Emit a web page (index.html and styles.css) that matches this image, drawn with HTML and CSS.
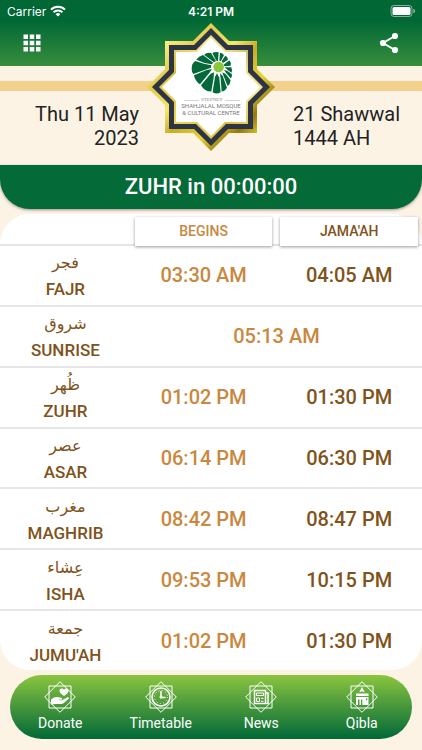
FILE: index.html
```html
<!DOCTYPE html>
<html lang="en">
<head>
    <meta charset="UTF-8">
    <meta name="viewport" content="width=device-width, initial-scale=1.0">
    <title>Stepney Shahjalal Mosque</title>
    <link rel="stylesheet" href="styles.css">
</head>
<body>
    <header>
        <!-- Status Bar -->
        <div class="status-bar">
            <div class="carrier">
                <span>Carrier</span>
                <svg width="16" height="12" viewBox="0 0 16 12" fill="none" stroke="#fff" stroke-width="2">
                    <path d="M1 4.6a10 10 0 0 1 14 0M3.6 7.2a6.3 6.3 0 0 1 8.8 0"/>
                    <path d="M8 11.6L5.6 9.2a3.5 3.5 0 0 1 4.8 0z" fill="#fff" stroke="none"/>
                </svg>
            </div>
            <span class="clock">4:21 PM</span>
            <div class="battery">
                <svg width="25" height="12" viewBox="0 0 25 12">
                    <rect x="1" y="0.5" width="21" height="11" rx="3" fill="none" stroke="#fff" stroke-opacity="0.5"/>
                    <rect x="2.5" y="2" width="18" height="8" rx="1.5" fill="#fff"/>
                    <path d="M23.3 4v4a2 2 0 0 0 0-4z" fill="#fff" fill-opacity="0.5"/>
                </svg>
            </div>
        </div>

        <div class="toolbar">
            <button aria-label="Menu">
                <svg width="18" height="18" viewBox="0 0 18 18" fill="#fff">
                    <path d="M.5.5h4.500v4.500H.5zM6.750.5h4.500v4.500h-4.500zM13 .5h4.500v4.500H13zM.5 6.750h4.500v4.500H.5zM6.750 6.750h4.500v4.500h-4.500zM13 6.750h4.500v4.500H13zM.5 13h4.500v4.500H.5zM6.750 13h4.500v4.500h-4.500zM13 13h4.500v4.500H13z"/>
                </svg>
            </button>
            <button aria-label="Share">
                <svg width="20" height="22" viewBox="0 0 20 22" fill="#fff">
                    <path d="M16 4L4 11l12 7" fill="none" stroke="#fff" stroke-width="2"/>
                    <circle cx="16" cy="4" r="3.1"/>
                    <circle cx="4" cy="11" r="3.1"/>
                    <circle cx="16" cy="18" r="3.1"/>
                </svg>
            </button>
        </div>

        <!-- Logo -->
        <svg class="logo" width="130" height="130" viewBox="-65 -65 130 130">
            <defs>
                <linearGradient id="gold" x1="0" y1="0" x2="1" y2="1">
                    <stop offset="0" stop-color="#e0c43c"/>
                    <stop offset="0.15" stop-color="#f9ee85"/>
                    <stop offset="0.28" stop-color="#e3cb4a"/>
                    <stop offset="0.42" stop-color="#f5e769"/>
                    <stop offset="0.52" stop-color="#c9aa24"/>
                    <stop offset="0.66" stop-color="#e6d535"/>
                    <stop offset="0.78" stop-color="#94770f"/>
                    <stop offset="0.87" stop-color="#d9c52e"/>
                    <stop offset="1" stop-color="#85690b"/>
                </linearGradient>
                <linearGradient id="gold-inner" x1="1" y1="0" x2="0" y2="1">
                    <stop offset="0" stop-color="#b8942c"/>
                    <stop offset="0.3" stop-color="#f8ef9b"/>
                    <stop offset="0.6" stop-color="#d8bd3a"/>
                    <stop offset="1" stop-color="#f4e76a"/>
                </linearGradient>
            </defs>
            <path fill="url(#gold)" d="M0-64L18-46H46V-18L64 0L46 18V46H18L0 64L-18 46H-46V18L-64 0L-46-18V-46H-18z"/>
            <path fill="#2d3446" d="M0-59L17-42H42V-17L59 0L42 17V42H17L0 59L-17 42H-42V17L-59 0L-42-17V-42H-17z"/>
            <path fill="url(#gold-inner)" d="M0-52L15-37H37V-15L52 0L37 15V37H15L0 52L-15 37H-37V15L-52 0L-37-15V-37H-15z"/>
            <path fill="#fff" d="M0-49L14-35H35V-14L49 0L35 14V35H14L0 49L-14 35H-35V14L-49 0L-35-14V-35H-14z"/>
            <!-- flower -->
            <g transform="translate(-25 -40) scale(0.333)">
                <g fill="#04693a">
                    <path d="M79 18Q89 13 98 16L96 42L91 41z"/>
                    <path d="M54 23Q64 15 75 18L90 42L84 46z"/>
                    <path d="M31 38Q38 27 51 24L82 47L77 52L56 48z"/>
                    <path d="M17 66Q16 50 28 42L54 50L76 55L75 62L22 81Q17 75 17 66z"/>
                    <path d="M24 85L62 69L78 66L70 78L42 112Q27 103 24 85z"/>
                    <path d="M45 115L74 80L84 76L83 92L76 134Q55 134 45 115z"/>
                    <path d="M80 136L87 90L93 79L100 92L104 136Q92 143 80 136z"/>
                    <path d="M107 134L104 94L102 79L110 86L123 122Q117 133 107 134z"/>
                    <path d="M125 117L113 88L109 76L119 81L134 100Q133 112 125 117z"/>
                    <path d="M134 94L121 79L114 68L125 72L138 82Q139 90 134 94z"/>
                    <path d="M137 77L125 69L116 61L136 61Q140 70 137 77z"/>
                    <path d="M134 56L115 58L113 53L130 40Q137 47 134 56z"/>
                    <path d="M126 38L111 48L107 43L118 26Q126 29 126 38z"/>
                    <path d="M114 25L105 42L100 41L102 17Q111 17 114 25z"/>
                </g>
                <circle cx="98" cy="60" r="16" fill="#8cc63f"/>
            </g>
            <path d="M-27 13.500H-12M14 13.500H29" stroke="#aaa" stroke-width="0.500"/>
            <text class="logo-top" x="1" y="14">STEPNEY</text>
            <text class="logo-name" x="0" y="21">SHAHJALAL MOSQUE</text>
            <text class="logo-name" x="0" y="28">&amp; CULTURAL CENTRE</text>
        </svg>
    </header>

    <div class="stripe"></div>

    <!-- Dates -->
    <div class="dates">
        <div class="date gregorian">Thu 11 May<br>2023</div>
        <div class="date hijri">21 Shawwal<br>1444 AH</div>
    </div>

    <h1 class="countdown">ZUHR in 00:00:00</h1>

    <!-- Prayer Times -->
    <main>
        <table>
            <thead>
                <tr>
                    <td class="name"></td>
                    <th scope="col" class="begins"><span>BEGINS</span></th>
                    <th scope="col" class="jamaah"><span>JAMA'AH</span></th>
                </tr>
            </thead>
            <tbody>
                <tr>
                    <th scope="row"><span class="arabic" lang="ar">فجر</span>FAJR</th>
                    <td class="begins">03:30 AM</td>
                    <td class="jamaah">04:05 AM</td>
                </tr>
                <tr>
                    <th scope="row"><span class="arabic" lang="ar">شروق</span>SUNRISE</th>
                    <td class="begins" colspan="2">05:13 AM</td>
                </tr>
                <tr>
                    <th scope="row"><span class="arabic" lang="ar">ظُهر</span>ZUHR</th>
                    <td class="begins">01:02 PM</td>
                    <td class="jamaah">01:30 PM</td>
                </tr>
                <tr>
                    <th scope="row"><span class="arabic" lang="ar">عصر</span>ASAR</th>
                    <td class="begins">06:14 PM</td>
                    <td class="jamaah">06:30 PM</td>
                </tr>
                <tr>
                    <th scope="row"><span class="arabic" lang="ar">مغرب</span>MAGHRIB</th>
                    <td class="begins">08:42 PM</td>
                    <td class="jamaah">08:47 PM</td>
                </tr>
                <tr>
                    <th scope="row"><span class="arabic" lang="ar">عِشاء</span>ISHA</th>
                    <td class="begins">09:53 PM</td>
                    <td class="jamaah">10:15 PM</td>
                </tr>
                <tr>
                    <th scope="row"><span class="arabic" lang="ar">جمعة</span>JUMU'AH</th>
                    <td class="begins">01:02 PM</td>
                    <td class="jamaah">01:30 PM</td>
                </tr>
            </tbody>
        </table>
    </main>

    <!-- Bottom Navigation -->
    <nav>
        <a href="#donate">
            <svg width="32" height="32" viewBox="0 0 32 32">
                <path class="star" d="M5 5h22v22H5zM16 .7L31.300 16L16 31.300L.7 16z"/>
                <path fill="#fff" d="M20 15c-3-2-4.500-3.500-4.500-5.200 0-2.600 3.300-3 4.500-.9 1.200-2.100 4.500-1.700 4.500.9 0 1.700-1.500 3.200-4.500 5.200z"/>
                <path fill="#fff" d="M7 18.500l3-2c1-.6 2-.7 3.200-.4l4 .7c1.500.4 1.300 1.900 0 2h-3.500l3.800.6 5.500-3c1.500-.7 2.600.5 1.500 1.600l-5 4.300c-.7.500-1.400.7-2.300.7h-5.500L7 23.500z"/>
            </svg>
            <span>Donate</span>
        </a>
        <a href="#timetable">
            <svg width="32" height="32" viewBox="0 0 32 32">
                <path class="star" d="M5 5h22v22H5zM16 .7L31.300 16L16 31.300L.7 16z"/>
                <circle cx="16" cy="16" r="9" fill="none" stroke="#fff" stroke-width="1.600"/>
                <circle cx="16" cy="16" r="6.500" fill="none" stroke="#fff" stroke-width="1" stroke-dasharray="1 2.400"/>
                <path d="M16 10v6.500h4.500" fill="none" stroke="#fff" stroke-width="1.500"/>
                <circle cx="16" cy="16" r="1.500" fill="#fff"/>
            </svg>
            <span>Timetable</span>
        </a>
        <a href="#news">
            <svg width="32" height="32" viewBox="0 0 32 32">
                <path class="star" d="M5 5h22v22H5zM16 .7L31.300 16L16 31.300L.7 16z"/>
                <path d="M9.500 9.500h11v13h-11zM20.500 12h2.500v10.500h-3" fill="none" stroke="#fff" stroke-width="1.500"/>
                <path d="M11.500 12h7v2.500h-7zM11.500 17h3v3.500h-3zM16 17.300h2.500M16 20.300h2.500" fill="none" stroke="#fff"/>
            </svg>
            <span>News</span>
        </a>
        <a href="#qibla">
            <svg width="32" height="32" viewBox="0 0 32 32">
                <path class="star" d="M5 5h22v22H5zM16 .7L31.300 16L16 31.300L.7 16z"/>
                <path fill="#fff" d="M16 6l2.800 5.300-2.800-1-2.800 1zM10 12.500h12.500V15H10z"/>
                <path fill="#fff" fill-rule="evenodd" d="M10 16h12.500v8H10zM12 18.500V24h1.500v-5.500zM15 18.500V24h1.300v-5.500zM20 17.300v2h1.300v-2z"/>
            </svg>
            <span>Qibla</span>
        </a>
    </nav>
</body>
</html>
```
FILE: styles.css
```css
* {
    box-sizing: border-box;
}

body {
    font-family: Roboto, 'Noto Sans', sans-serif;
    background-color: #fcf3e5;
    color: #222;
    margin: 0;
    padding: 0;
}

header {
    position: relative;
    height: 66px;
    background: linear-gradient(#006735 30%, #388e3c);
    color: #fff;
}

.status-bar {
    display: grid;
    grid-template-columns: 1fr auto 1fr;
    align-items: center;
    height: 22px;
    padding: 0 7px;
    font-family: Inter, sans-serif;
    font-size: 12px;
}

.carrier {
    display: flex;
    align-items: center;
    gap: 4px;
}

.clock {
    font-weight: 600;
}

.battery {
    display: flex;
    justify-content: flex-end;
}

.toolbar {
    display: flex;
    justify-content: space-between;
    align-items: center;
    height: 42px;
    padding: 0 15px;
}

.toolbar button {
    display: flex;
    background: none;
    border: none;
    padding: 8px;
    cursor: pointer;
}

.logo {
    position: absolute;
    top: 22px;
    left: 50%;
    transform: translateX(-50%);
}

.logo-top {
    font-family: 'Liberation Serif', serif;
    font-size: 5px;
    fill: #888;
    text-anchor: middle;
}

.logo-name {
    font-family: 'Liberation Sans Narrow', Roboto, sans-serif;
    font-size: 6px;
    fill: #777;
    text-anchor: middle;
}

.stripe {
    height: 10px;
    margin-top: 15px;
    background: #f3d08b;
}

.dates {
    display: grid;
    grid-template-columns: 1fr 1fr;
    column-gap: 154px;
    padding: 11px 0 15px 10px;
    font-size: 20px;
    line-height: 24px;
    white-space: nowrap;
}

.gregorian {
    justify-self: end;
    text-align: right;
}

.countdown {
    height: 44px;
    margin: 0;
    border-radius: 0 0 30px 30px;
    background: #046a38;
    box-shadow: 0 1px 3px rgba(0,0,0,0.4);
    color: #fff;
    font-size: 22px;
    font-weight: 500;
    line-height: 44px;
    text-align: center;
}

main {
    margin-top: 5px;
    background: #fff;
    border-radius: 30px;
}

table {
    width: 100%;
    height: 456px;
    table-layout: fixed;
    border-collapse: collapse;
    color: #7f531b;
    text-align: center;
}

th, td {
    padding: 0;
    font-weight: 500;
}

thead tr {
    height: 31px;
}

tbody tr {
    border-top: 2px solid #e6e6e8;
}

.name {
    width: 31%;
}

thead th {
    padding: 3px 4px 0;
    vertical-align: top;
}

thead span {
    display: block;
    position: relative;
    height: 29px;
    margin-bottom: -4px;
    background: #fff;
    box-shadow: 0 1px 3px rgba(0,0,0,0.4);
    font-size: 14px;
    line-height: 29px;
}

tbody th {
    padding-top: 2px;
    font-size: 17px;
    line-height: 26px;
}

.arabic {
    display: block;
    font-family: 'DejaVu Sans', sans-serif;
    font-size: 16px;
    font-weight: 400;
}

tbody td {
    font-size: 20px;
}

.begins {
    color: #c98840;
}

nav {
    display: flex;
    height: 64px;
    margin: 5px 10px 11px;
    border-radius: 32px;
    background: linear-gradient(#8bc53f, #006838);
}

nav a {
    flex: 1;
    display: flex;
    flex-direction: column;
    align-items: center;
    padding-top: 6px;
    color: #fff;
    font-size: 14px;
    line-height: 20px;
    text-decoration: none;
}

.star {
    fill: none;
    stroke: #fff;
    stroke-width: 1;
}
```
